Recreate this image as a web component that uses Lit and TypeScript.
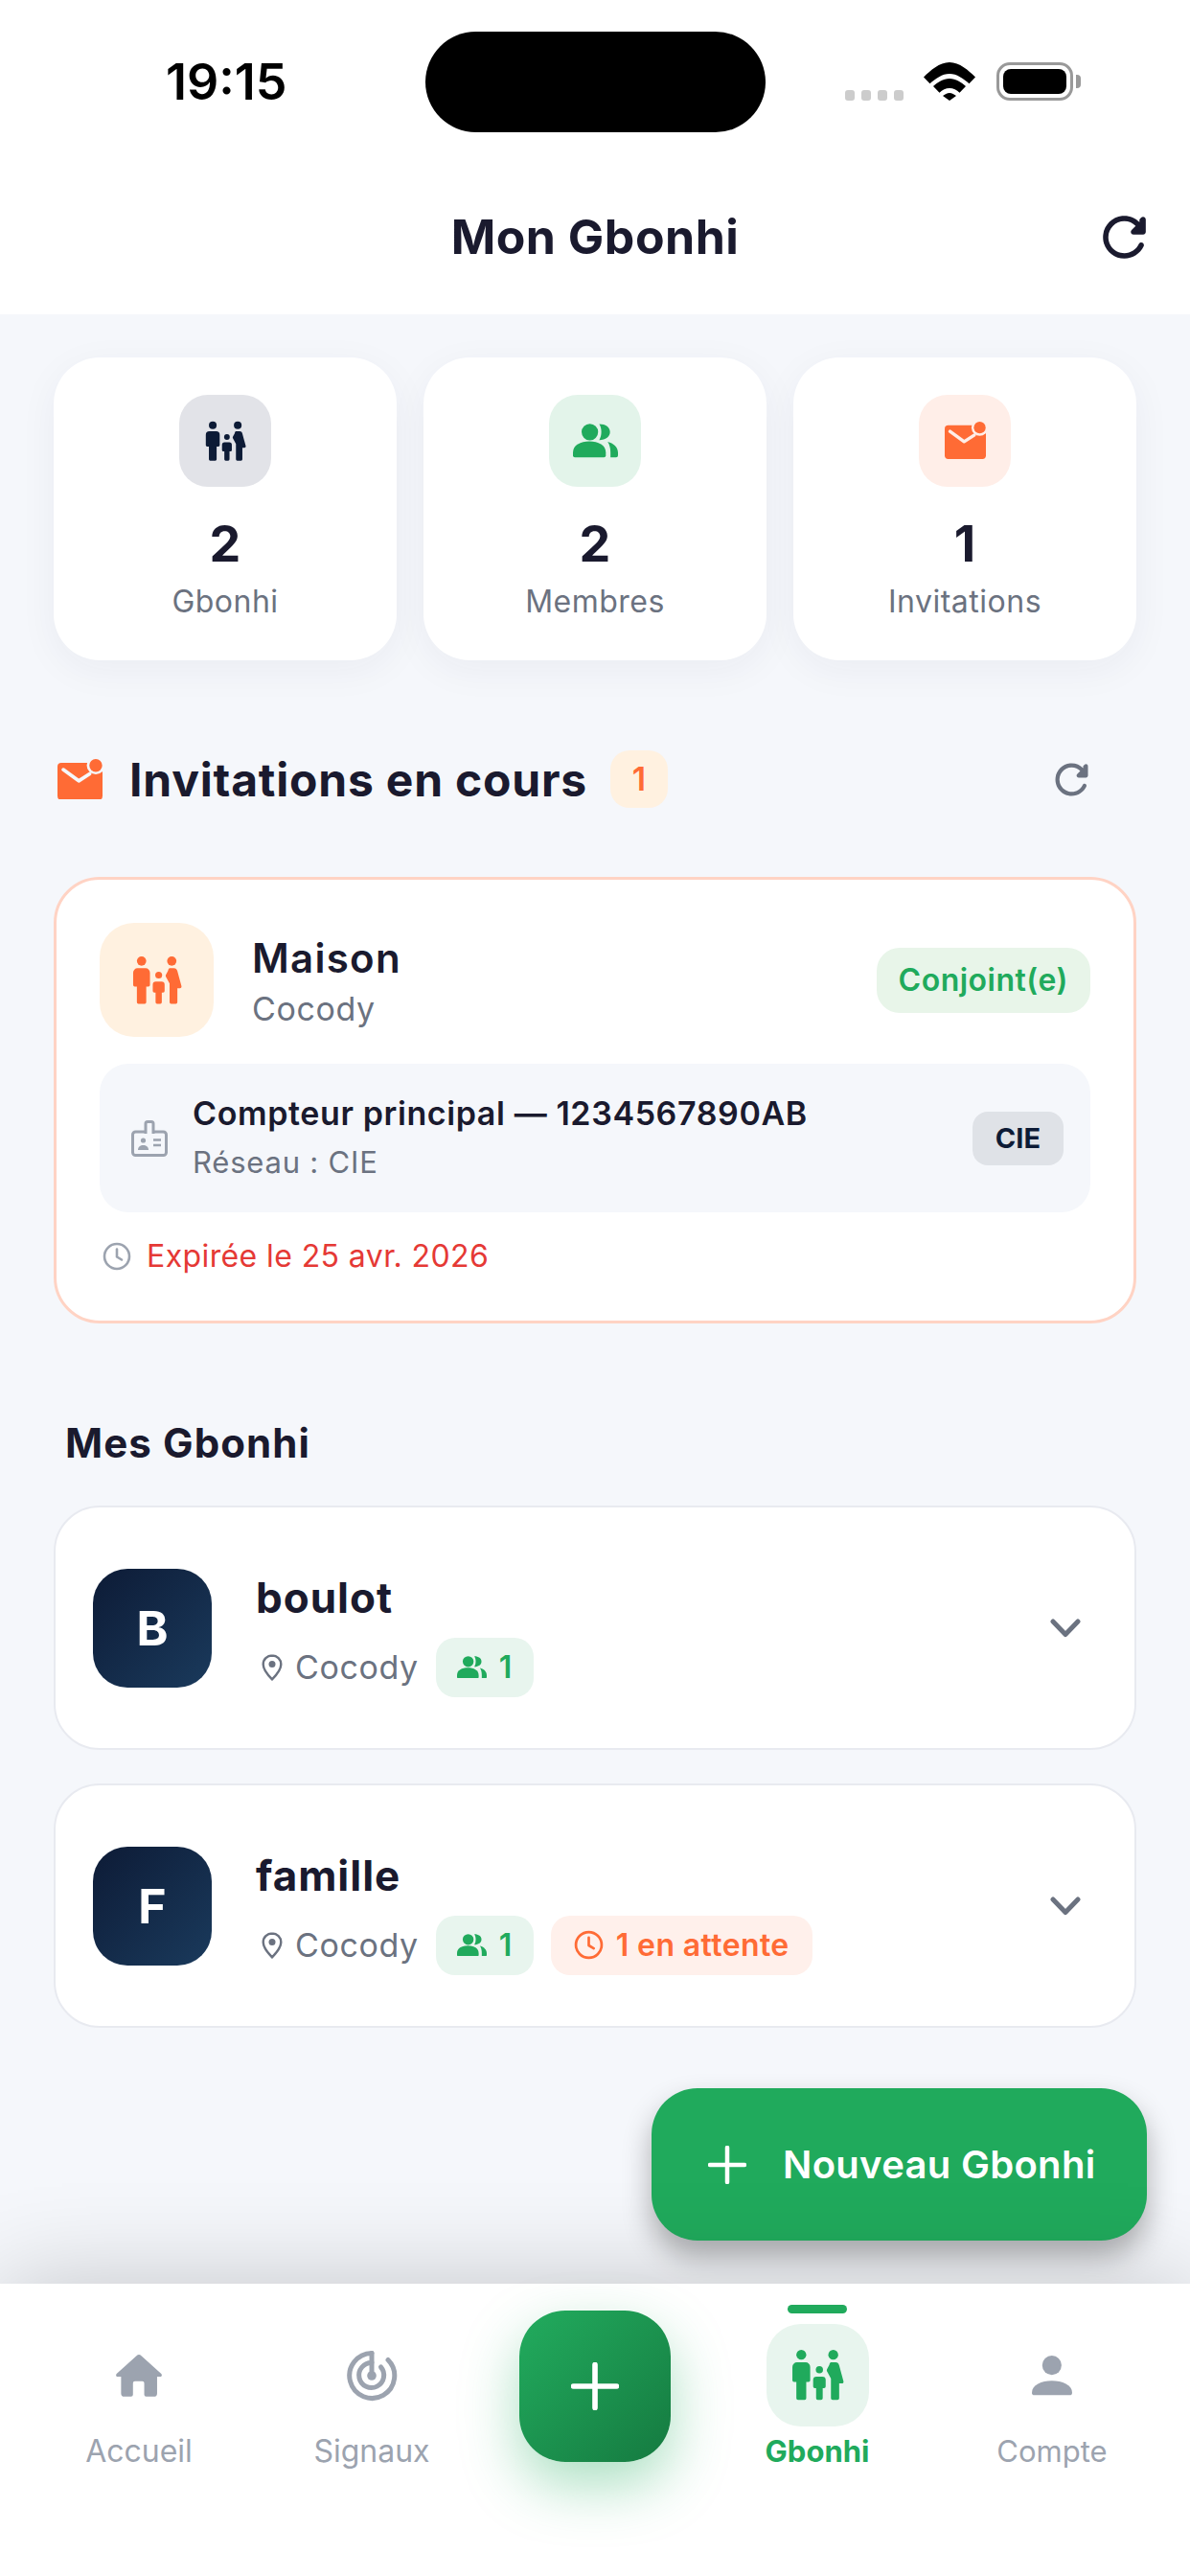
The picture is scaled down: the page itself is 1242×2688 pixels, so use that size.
import { LitElement, css, html, svg } from 'lit';
import { customElement } from 'lit/decorators.js';

const family = (size: number, color: string) => html`
  <svg width=${size} height=${size} viewBox="0 0 160 160" fill=${color}>
    <circle cx="30" cy="18" r="15" />
    <path d="M17 41h26a14 14 0 0 1 14 14v40a5 5 0 0 1-5 5h-7v50a5 5 0 0 1-5 5H20a5 5 0 0 1-5-5v-50H8a5 5 0 0 1-5-5V55a14 14 0 0 1 14-14z" />
    <circle cx="85" cy="63" r="11" />
    <path d="M76 84h18a10 10 0 0 1 10 10v20a5 5 0 0 1-5 5h-4v31a5 5 0 0 1-5 5H80a5 5 0 0 1-5-5v-31h-4a5 5 0 0 1-5-5V94a10 10 0 0 1 10-10z" />
    <circle cx="127" cy="18" r="15" />
    <path d="M120 41h14c6 0 9 3 11 9l13 48c1 4-1 7-5 7h-8v45a5 5 0 0 1-5 5h-15a5 5 0 0 1-5-5V90l-11-20c-2-3-2-5-1-8l7-13c1-5 3-8 5-8z" />
  </svg>
`;

const members = (w: number, color: string) => html`
  <svg width=${w} height=${(w * 36) / 48} viewBox="0 0 48 36" fill=${color}>
    <circle cx="18" cy="9" r="8.800" />
    <path d="M0 34v-3c0-8 8-12 17.500-12S35 23 35 31v3a2 2 0 0 1-2 2H2a2 2 0 0 1-2-2z" />
    <path d="M28 .5C35 .5 39.500 4 39.500 9S35 17.500 28 17.500C31 13 31 5 28 .5z" />
    <path d="M37 19.500c6 1.500 11 5.500 11 11.500v3a2 2 0 0 1-2 2h-6v-5c0-5-1-8.500-3-11.500z" />
  </svg>
`;

let maskCount = 0;
const mail = (w: number, color: string) => {
  const id = `mail-cut-${maskCount++}`;
  return html`
    <svg width=${w} height=${(w * 128) / 140} viewBox="0 0 140 128">
      <mask id=${id}>
        <rect width="140" height="128" fill="#fff" />
        <circle cx="119" cy="20" r="28" fill="#000" />
        <polyline points="18,33 66,68 100,46" fill="none" stroke="#000" stroke-width="11" stroke-linecap="round" stroke-linejoin="round" />
      </mask>
      <rect y="12" width="140" height="115" rx="12" fill=${color} mask="url(#${id})" />
      <circle cx="119" cy="20" r="20" fill=${color} />
    </svg>
  `;
};

const refresh = (size: number, color: string) => html`
  <svg width=${size} height=${size} viewBox="0 0 24 24" fill=${color}>
    <path d="M17.650 6.350c-1.630-1.630-3.940-2.570-6.480-2.310-3.670.37-6.690 3.350-7.100 7.020C3.520 15.910 7.270 20 12 20c3.190 0 5.930-1.870 7.210-4.560.32-.67-.16-1.440-.9-1.440-.37 0-.72.2-.88.53-1.130 2.430-3.840 3.970-6.800 3.310-2.220-.49-4.010-2.300-4.480-4.520C5.310 9.440 8.260 6 12 6c1.660 0 3.140.69 4.220 1.780l-1.510 1.510c-.63.63-.19 1.710.7 1.710H19c.55 0 1-.45 1-1V5.410c0-.89-1.080-1.340-1.710-.71l-.64.65z" />
  </svg>
`;

const clock = (size: number, color: string) => html`
  <svg width=${size} height=${size} viewBox="0 0 30 30" fill="none" stroke=${color} stroke-width="2.600" stroke-linecap="round" stroke-linejoin="round">
    <circle cx="15" cy="15" r="13" />
    <polyline points="15,7.500 15,15.500 20,18.500" />
  </svg>
`;

const pin = html`
  <svg width="22" height="28" viewBox="0 0 22 28" fill="none" stroke="#6b7280" stroke-width="2.400">
    <path d="M11 1.500c-5.200 0-9.300 4-9.300 9.200 0 6.300 6 12.300 9.300 15.600 3.300-3.300 9.300-9.300 9.300-15.600 0-5.200-4.100-9.200-9.300-9.200z" />
    <circle cx="11" cy="10.500" r="3.500" fill="#6b7280" stroke="none" />
  </svg>
`;

const chevron = html`
  <svg class="chevron" width="32" height="20" viewBox="0 0 32 20" fill="none" stroke="#6b7280" stroke-width="5" stroke-linecap="round" stroke-linejoin="round">
    <polyline points="3,3 16,16.500 29,3" />
  </svg>
`;

const plus = (size: number, width: number) => html`
  <svg width=${size} height=${size} viewBox="0 0 40 40" stroke="#fff" stroke-width=${width} stroke-linecap="round">
    <path d="M20 2v36M2 20h36" />
  </svg>
`;

const meterIcon = html`
  <svg width="38" height="38" viewBox="0 0 38 38" fill="none" stroke="#9ca3af" stroke-width="3">
    <rect x="1.500" y="12" width="35" height="24.500" rx="3" />
    <path d="M15 14V3.500a2 2 0 0 1 2-2h4a2 2 0 0 1 2 2V14" fill="#f5f7fb" />
    <circle cx="12.500" cy="21" r="2.600" fill="#9ca3af" stroke="none" />
    <path d="M7 31c0-3.500 2.500-5 5.500-5s5.500 1.500 5.500 5z" fill="#9ca3af" stroke="none" />
    <path d="M23 20.500h8M23 26h8" stroke-width="2.600" />
  </svg>
`;

const homeIcon = html`
  <svg width="48" height="44" viewBox="0 0 143 130" fill="#9ca3af">
    <path d="M64 3a11 11 0 0 1 15 0l62 56c3 3 2 9-3 9h-10v52a10 10 0 0 1-10 10H94a6 6 0 0 1-6-6V88a6 6 0 0 0-6-6H59a6 6 0 0 0-6 6v36a6 6 0 0 1-6 6H26a10 10 0 0 1-10-10V68H5c-5 0-6-6-3-9z" />
  </svg>
`;

const radarIcon = html`
  <svg width="54" height="54" viewBox="0 0 54 54" fill="none" stroke="#9ca3af" stroke-width="5" stroke-linecap="round">
    <path d="M27 3.500A23.500 23.500 0 1 0 44 10.500" />
    <path d="M27 13.500A13 13 0 1 0 36.500 18" />
    <path d="M27 3.500V26" />
    <circle cx="27" cy="27" r="4.800" fill="#9ca3af" stroke="none" />
  </svg>
`;

const personIcon = html`
  <svg width="42" height="42" viewBox="0 0 125 125" fill="#9ca3af">
    <circle cx="62" cy="30" r="30" />
    <path d="M0 115c0-24 30-37 62-37s63 13 63 37a8 8 0 0 1-8 8H8a8 8 0 0 1-8-8z" />
  </svg>
`;

const wifi = svg`
  <path d="M0 15.500C7 8.500 16.500 0 27 0s20 8.500 27 15.500l-6.500 6.800C41.500 17 34.500 12 27 12S12.500 17 6.500 22.300z" />
  <path d="M10 25c4.500-4 10.500-8 17-8s12.500 4 17 8l-6.500 6.800C34.500 29 31 27 27 27s-7.500 2-10.500 4.800z" />
  <path d="M20 35c2-1.500 4.500-3 7-3s5 1.500 7 3l-7 5z" />
`;

const stats = [
  { icon: () => family(43, '#0d1b36'), tint: 'slate', value: '2', label: 'Gbonhi' },
  { icon: () => members(47, '#20aa5c'), tint: 'green', value: '2', label: 'Membres' },
  { icon: () => mail(43, '#ff6b35'), tint: 'orange', value: '1', label: 'Invitations' }
];

const groups = [
  { letter: 'B', name: 'boulot', members: 1, pending: 0 },
  { letter: 'F', name: 'famille', members: 1, pending: 1 }
];

const tabs = [
  { label: 'Accueil', icon: () => homeIcon },
  { label: 'Signaux', icon: () => radarIcon },
  null,
  { label: 'Gbonhi', icon: () => family(55, '#20aa5c'), active: true },
  { label: 'Compte', icon: () => personIcon }
];

@customElement('app-root')
export class AppRoot extends LitElement {
  static styles = css`
    :host {
      display: flex;
      flex-direction: column;
      width: 1242px;
      height: 2688px;
      overflow: hidden;
      background: #f5f7fb;
      color: #1a1a2e;
      font-family: Inter, 'Liberation Sans', sans-serif;
    }
    .top {
      background: #fff;
    }
    .status {
      display: grid;
      grid-template-columns: 444px 355px 1fr;
      height: 170px;
      padding-top: 33px;
      box-sizing: border-box;
    }
    .time {
      padding: 18px 0 0 173px;
      font-size: 52px;
      font-weight: 600;
      line-height: 70px;
      color: #000;
    }
    .island {
      height: 105px;
      border-radius: 53px;
      background: #000;
    }
    .indicators {
      display: flex;
      align-items: flex-end;
      height: 72px;
      padding-left: 83px;
    }
    .dots {
      display: flex;
      gap: 7px;
      margin-right: 21px;
    }
    .dots i {
      width: 10px;
      height: 11px;
      border-radius: 3px;
      background: #ccc;
    }
    .battery {
      display: flex;
      align-items: center;
      margin-left: 22px;
    }
    .cell {
      box-sizing: border-box;
      width: 80px;
      height: 40px;
      padding: 4px;
      border: 3px solid #999;
      border-radius: 14px;
    }
    .cell i {
      display: block;
      height: 100%;
      border-radius: 8px;
      background: #000;
    }
    .nub {
      width: 5px;
      height: 14px;
      margin-left: 3px;
      border-radius: 0 4px 4px 0;
      background: #999;
    }
    .header {
      display: grid;
      grid-template-columns: 1fr auto 1fr;
      align-items: center;
      height: 158px;
      padding: 0 35px 4px;
      box-sizing: border-box;
    }
    .header h1 {
      grid-column: 2;
      margin: 0;
      font-size: 50px;
      font-weight: 700;
      letter-spacing: 0.5px;
    }
    .header svg {
      justify-self: end;
    }
    main {
      position: relative;
      flex: 1;
      padding: 45px 56px;
    }
    .stats {
      display: grid;
      grid-template-columns: repeat(3, 1fr);
      gap: 28px;
    }
    .stat {
      display: flex;
      flex-direction: column;
      align-items: center;
      height: 316px;
      padding-top: 39px;
      box-sizing: border-box;
      border-radius: 48px;
      background: #fff;
      box-shadow: 0 10px 40px rgba(30, 40, 80, 0.05);
    }
    .stat-icon {
      display: flex;
      align-items: center;
      justify-content: center;
      width: 96px;
      height: 96px;
      border-radius: 30px;
    }
    .slate {
      background: #e2e3e8;
    }
    .green {
      background: #e3f4ea;
    }
    .orange {
      background: #ffeee8;
    }
    .stat b {
      margin-top: 30px;
      font-size: 52px;
      font-weight: 700;
      line-height: 60px;
    }
    .stat span {
      margin-top: 10px;
      font-size: 32px;
      line-height: 40px;
      letter-spacing: 0.5px;
      color: #6b7280;
    }
    .section {
      display: flex;
      align-items: center;
      height: 60px;
      margin: 94px 0 72px;
      padding: 0 42px 0 4px;
    }
    .section h2 {
      margin: 0 24px 0 28px;
      font-size: 48px;
      font-weight: 700;
      letter-spacing: 0.8px;
    }
    .count {
      width: 60px;
      line-height: 60px;
      border-radius: 20px;
      background: #fff1e0;
      color: #ff6b35;
      font-size: 34px;
      font-weight: 600;
      text-align: center;
    }
    .section .reload {
      display: flex;
      margin-left: auto;
    }
    .invite {
      box-sizing: border-box;
      height: 466px;
      padding: 45px 45px 0;
      border: 3px solid #ffd3c4;
      border-radius: 48px;
      background: #fff;
    }
    .invite-head {
      display: flex;
      align-items: center;
    }
    .invite-icon {
      display: flex;
      align-items: center;
      justify-content: center;
      width: 119px;
      height: 119px;
      margin-right: 40px;
      border-radius: 36px;
      background: #fff1e0;
    }
    .invite-name {
      font-size: 42px;
      font-weight: 600;
      line-height: 60px;
      letter-spacing: 1.3px;
    }
    .invite-place {
      font-size: 34px;
      line-height: 46px;
      letter-spacing: 0.6px;
      color: #6b7280;
    }
    .role {
      margin-left: auto;
      padding: 0 23px;
      border-radius: 24px;
      background: #e8f5e9;
      color: #20aa5c;
      font-size: 32px;
      font-weight: 600;
      line-height: 68px;
      letter-spacing: 0.5px;
    }
    .meter {
      display: flex;
      align-items: center;
      height: 155px;
      margin-top: 28px;
      padding: 0 28px 0 33px;
      box-sizing: border-box;
      border-radius: 30px;
      background: #f5f7fb;
    }
    .meter-text {
      margin-left: 26px;
    }
    .meter-name {
      font-size: 34px;
      font-weight: 600;
      line-height: 50px;
      letter-spacing: 0.6px;
    }
    .meter-net {
      font-size: 31px;
      line-height: 52px;
      letter-spacing: 0.8px;
      color: #6b7280;
    }
    .network {
      margin-left: auto;
      padding: 0 24px;
      border-radius: 16px;
      background: #dfe2e7;
      color: #0d1b36;
      font-size: 29px;
      font-weight: 700;
      line-height: 56px;
    }
    .expiry {
      display: flex;
      align-items: center;
      gap: 16px;
      margin: 27px 0 0 3px;
      color: #e53935;
      font-size: 32px;
      line-height: 38px;
      letter-spacing: 0.4px;
    }
    .list-title {
      margin: 100px 0 40px 12px;
      font-size: 42px;
      font-weight: 700;
      line-height: 50px;
      letter-spacing: 1.1px;
    }
    .group {
      display: flex;
      align-items: center;
      box-sizing: border-box;
      height: 255px;
      margin-bottom: 35px;
      padding: 0 56px 0 39px;
      border: 2px solid #e8eaf0;
      border-radius: 48px;
      background: #fff;
    }
    .avatar {
      display: flex;
      align-items: center;
      justify-content: center;
      width: 124px;
      height: 124px;
      margin-right: 46px;
      border-radius: 36px;
      background: linear-gradient(135deg, #0d1b36, #1a3a5c);
      color: #fff;
      font-size: 50px;
      font-weight: 700;
    }
    .group-name {
      margin-top: 10px;
      font-size: 44px;
      font-weight: 700;
      line-height: 60px;
      letter-spacing: 1px;
    }
    .group-meta {
      display: flex;
      align-items: center;
      gap: 18px;
      margin-top: 12px;
      padding-left: 6px;
    }
    .place {
      display: flex;
      align-items: center;
      gap: 13px;
      font-size: 34px;
      letter-spacing: 0.6px;
      color: #6b7280;
    }
    .pill {
      display: flex;
      align-items: center;
      gap: 13px;
      height: 62px;
      padding: 0 22px;
      border-radius: 20px;
      font-size: 32px;
      font-weight: 600;
      letter-spacing: 0.4px;
    }
    .pill.members {
      background: #e8f5ee;
      color: #20aa5c;
    }
    .pill.pending {
      padding: 0 24px;
      background: #fff0eb;
      color: #ff6b35;
    }
    .chevron {
      margin-left: auto;
    }
    .fab {
      position: absolute;
      right: 45px;
      bottom: 45px;
      display: flex;
      align-items: center;
      gap: 38px;
      box-sizing: border-box;
      width: 517px;
      height: 159px;
      padding-left: 59px;
      border-radius: 48px;
      background: #20aa5c;
      box-shadow: 0 16px 30px rgba(0, 0, 0, 0.3);
      color: #fff;
      font-size: 40px;
      font-weight: 600;
      letter-spacing: 0.3px;
    }
    nav {
      position: relative;
      display: grid;
      grid-template-columns: 290px 196px 270px 194px 292px;
      align-items: start;
      height: 305px;
      padding-top: 42px;
      box-sizing: border-box;
      background: #fff;
      box-shadow: 0 0 100px rgba(0, 0, 0, 0.2);
    }
    .tab {
      position: relative;
      display: flex;
      flex-direction: column;
      align-items: center;
      color: #9ca3af;
      font-size: 32px;
      line-height: 40px;
      white-space: nowrap;
    }
    .tab:last-child {
      left: 2px;
      font-size: 31px;
    }
    .tab-icon {
      display: flex;
      align-items: center;
      justify-content: center;
      width: 107px;
      height: 107px;
      margin-bottom: 6px;
      border-radius: 36px;
    }
    .tab.active {
      color: #20aa5c;
      font-size: 31px;
      font-weight: 700;
    }
    .tab.active .tab-icon {
      background: #e8f5ee;
    }
    .tab.active::before {
      content: '';
      position: absolute;
      top: -20px;
      width: 62px;
      height: 9px;
      border-radius: 5px;
      background: #20aa5c;
    }
    .add {
      display: flex;
      align-items: center;
      justify-content: center;
      justify-self: center;
      width: 158px;
      height: 158px;
      margin-top: -14px;
      border-radius: 48px;
      background: linear-gradient(135deg, #22ac5e, #157a40);
      box-shadow: 0 24px 60px rgba(32, 170, 92, 0.38);
    }
  `;

  renderGroup(g: (typeof groups)[number]) {
    return html`
      <div class="group">
        <div class="avatar">${g.letter}</div>
        <div>
          <div class="group-name">${g.name}</div>
          <div class="group-meta">
            <span class="place">${pin}Cocody</span>
            <span class="pill members">${members(31, '#20aa5c')}${g.members}</span>
            ${g.pending
              ? html`<span class="pill pending">${clock(31, '#ff6b35')}${g.pending} en attente</span>`
              : null}
          </div>
        </div>
        ${chevron}
      </div>
    `;
  }

  render() {
    return html`
      <div class="top">
        <div class="status">
          <div class="time">19:15</div>
          <div class="island"></div>
          <div class="indicators">
            <div class="dots"><i></i><i></i><i></i><i></i></div>
            <svg width="54" height="40" viewBox="0 0 54 40" fill="#000">${wifi}</svg>
            <div class="battery">
              <div class="cell"><i></i></div>
              <div class="nub"></div>
            </div>
          </div>
        </div>
        <div class="header">
          <h1>Mon Gbonhi</h1>
          ${refresh(67, '#1a1a2e')}
        </div>
      </div>

      <main>
        <div class="stats">
          ${stats.map(
            (s) => html`
              <div class="stat">
                <div class="stat-icon ${s.tint}">${s.icon()}</div>
                <b>${s.value}</b>
                <span>${s.label}</span>
              </div>
            `
          )}
        </div>

        <div class="section">
          ${mail(47, '#ff6b35')}
          <h2>Invitations en cours</h2>
          <div class="count">1</div>
          <div class="reload">${refresh(51, '#6b7280')}</div>
        </div>

        <div class="invite">
          <div class="invite-head">
            <div class="invite-icon">${family(52, '#ff6b35')}</div>
            <div>
              <div class="invite-name">Maison</div>
              <div class="invite-place">Cocody</div>
            </div>
            <div class="role">Conjoint(e)</div>
          </div>
          <div class="meter">
            ${meterIcon}
            <div class="meter-text">
              <div class="meter-name">Compteur principal — 1234567890AB</div>
              <div class="meter-net">Réseau : CIE</div>
            </div>
            <div class="network">CIE</div>
          </div>
          <div class="expiry">${clock(30, '#9ca3af')}Expirée le 25 avr. 2026</div>
        </div>

        <div class="list-title">Mes Gbonhi</div>
        ${groups.map((g) => this.renderGroup(g))}

        <div class="fab">${plus(40, 4.5)}Nouveau Gbonhi</div>
      </main>

      <nav>
        ${tabs.map((t) =>
          t
            ? html`
                <div class="tab ${t.active ? 'active' : ''}">
                  <div class="tab-icon">${t.icon()}</div>
                  ${t.label}
                </div>
              `
            : html`<div class="add">${plus(50, 4.5)}</div>`
        )}
      </nav>
    `;
  }
}
